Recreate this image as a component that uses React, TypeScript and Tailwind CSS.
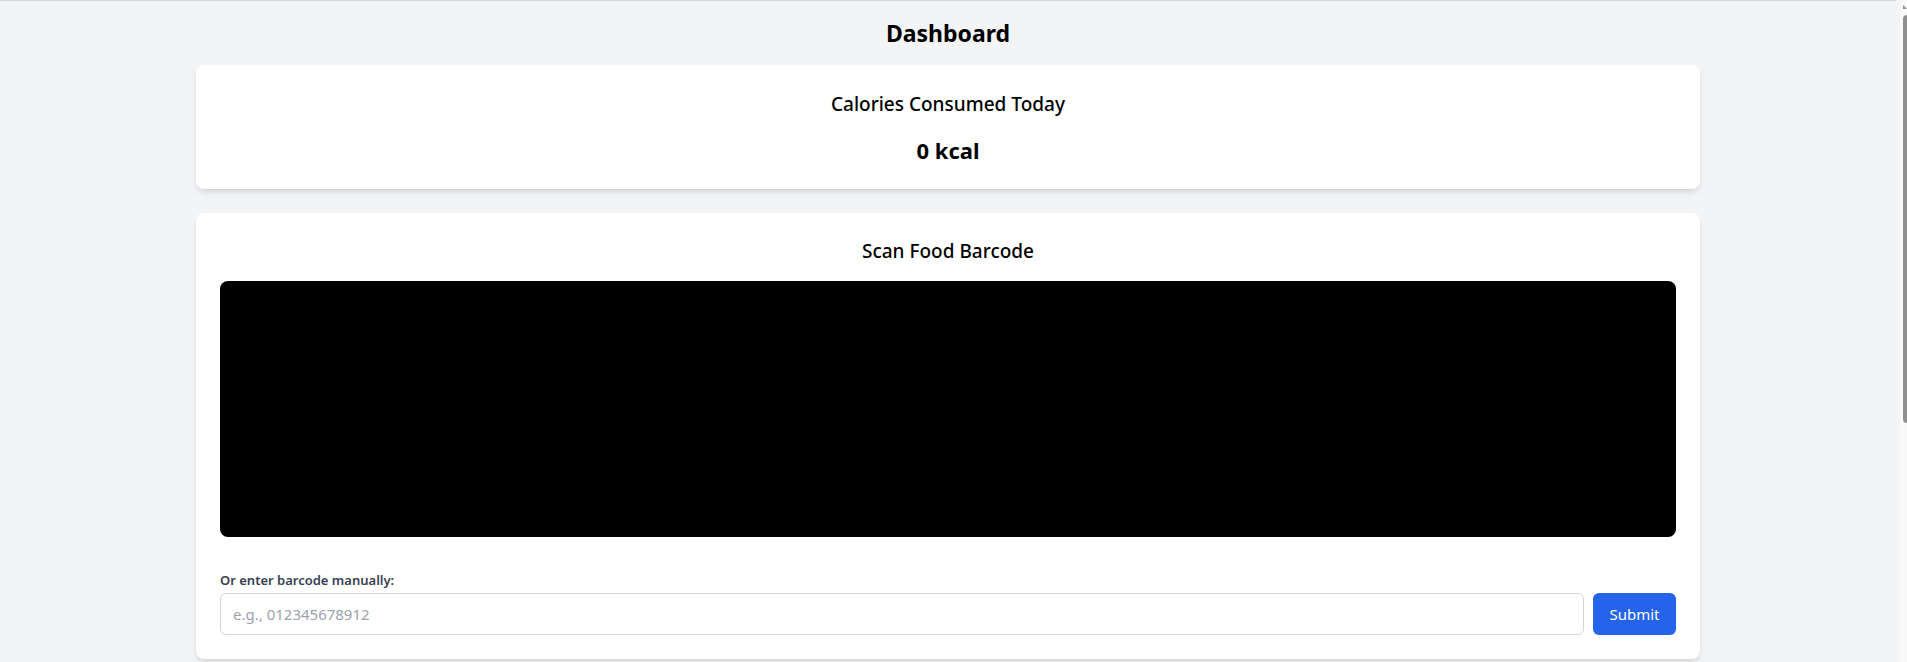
import { useState } from 'react';

export default function App() {
  const [barcode, setBarcode] = useState('');
  const [calories] = useState(0);

  return (
    <div
      className="min-h-screen bg-[#f3f4f6] text-black"
      style={{ fontFamily: '"Noto Sans", "Open Sans", sans-serif' }}
    >
      <div className="w-[1896px] border-t border-gray-300 pt-4 pb-8">
        <h1 className="mb-4 text-center text-[23px] leading-8 font-bold">Dashboard</h1>

        <div className="mx-auto flex w-[1504px] flex-col gap-6">
          {/* Calories card */}
          <div className="rounded-lg bg-white px-6 pt-[25px] pb-[23px] text-center shadow-md">
            <h2 className="mb-4 text-[19px] leading-7 font-medium">Calories Consumed Today</h2>
            <p className="text-[22px] leading-8 font-bold">{calories} kcal</p>
          </div>

          {/* Scanner card */}
          <div className="rounded-lg bg-white p-6 shadow-md">
            <h2 className="mb-4 text-center text-[19px] leading-7 font-medium">Scan Food Barcode</h2>
            <div className="h-64 w-full rounded-lg bg-black" />

            <div className="mt-[33px]">
              <label className="mb-[3px] block text-[13px] leading-5 font-semibold text-[#374151]">
                Or enter barcode manually:
              </label>
              <div className="flex gap-[9px]">
                <input
                  type="text"
                  value={barcode}
                  onChange={(e) => setBarcode(e.target.value)}
                  placeholder="e.g., 012345678912"
                  className="h-[42px] flex-1 rounded-md border border-[#d1d5db] bg-white px-3 text-[15px] text-gray-900 placeholder:text-[#9ca3af] focus:outline-none"
                />
                <button className="h-[42px] w-[83px] rounded-md bg-[#2563eb] text-[15px] text-white">
                  Submit
                </button>
              </div>
            </div>
          </div>
        </div>
      </div>

      {/* scrollbar */}
      <div className="fixed top-0 right-0 h-full w-[7px] bg-[#f9f9f9]">
        <div className="absolute top-[5px] right-0 h-0 w-0 border-r-[4px] border-b-[4px] border-r-transparent border-b-[#8f8f8f]" />
        <div className="absolute top-[15px] right-0 h-[408px] w-[4px] rounded-l-sm bg-[#8f8f8f]" />
      </div>
    </div>
  );
}
